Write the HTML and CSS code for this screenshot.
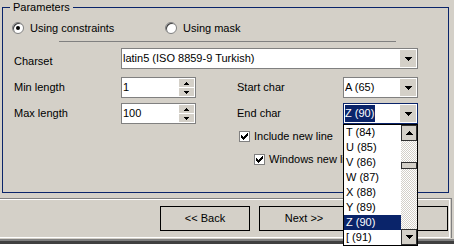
FILE: index.html
```html
<!DOCTYPE html>
<html>
<head>
<meta charset="utf-8">
<link rel="stylesheet" href="styles.css">
</head>
<body>
<div class="window">
  <div class="group">
    <span class="legend">Parameters</span>
    <div class="radios">
      <label class="radio first"><span class="rb checked"></span><span class="rtext">Using constraints</span></label>
      <label class="radio"><span class="rb"></span><span class="rtext">Using mask</span></label>
    </div>
    <div class="sep"></div>
    <div class="row charset">
      <span class="lbl low">Charset</span>
      <div class="combo wide"><span class="val">latin5 (ISO 8859-9 Turkish)</span><span class="dbtn"><svg width="7" height="4" viewBox="0 0 7 4"><path d="M0 0h7v1h-1v1h-1v1h-1v1h-1v-1h-1v-1h-1v-1h-1z"/></svg></span></div>
    </div>
    <div class="row r2">
      <span class="lbl">Min length</span>
      <div class="spin"><span class="val">1</span><span class="sbtns"><span class="sb"><svg width="5" height="3" viewBox="0 0 5 3"><path d="M2 0h1v1h1v1h1v1h-5v-1h1v-1h1z"/></svg></span><span class="sb"><svg width="5" height="3" viewBox="0 0 5 3"><path d="M0 0h5v1h-1v1h-1v1h-1v-1h-1v-1h-1z"/></svg></span></span></div>
      <span class="lbl2">Start char</span>
      <div class="combo small"><span class="val">A (65)</span><span class="dbtn"><svg width="7" height="4" viewBox="0 0 7 4"><path d="M0 0h7v1h-1v1h-1v1h-1v1h-1v-1h-1v-1h-1v-1h-1z"/></svg></span></div>
    </div>
    <div class="row r3">
      <span class="lbl">Max length</span>
      <div class="spin"><span class="val">100</span><span class="sbtns"><span class="sb"><svg width="5" height="3" viewBox="0 0 5 3"><path d="M2 0h1v1h1v1h1v1h-5v-1h1v-1h1z"/></svg></span><span class="sb"><svg width="5" height="3" viewBox="0 0 5 3"><path d="M0 0h5v1h-1v1h-1v1h-1v-1h-1v-1h-1z"/></svg></span></span></div>
      <span class="lbl2">End char</span>
      <div class="combo small focus"><span class="val"><span class="sel">Z (90)</span></span><span class="dbtn"><svg width="7" height="4" viewBox="0 0 7 4"><path d="M0 0h7v1h-1v1h-1v1h-1v1h-1v-1h-1v-1h-1v-1h-1z"/></svg></span></div>
    </div>
    <div class="check c1"><span class="cb"><svg width="7" height="7" viewBox="0 0 7 7"><path d="M0 2h1v1h1v1h1v-1h1v-1h1v-1h1v-1h1v3h-1v1h-1v1h-1v1h-1v1h-1v-1h-1v-1h-1v-1h-1z"/></svg></span><span class="ctext">Include new line</span></div>
    <div class="check c2"><span class="cb"><svg width="7" height="7" viewBox="0 0 7 7"><path d="M0 2h1v1h1v1h1v-1h1v-1h1v-1h1v-1h1v3h-1v1h-1v1h-1v1h-1v1h-1v-1h-1v-1h-1v-1h-1z"/></svg></span><span class="ctext">Windows new line</span></div>
  </div>
  <div class="footer">
    <div class="panel">
      <div class="buttons">
        <span class="button">&lt;&lt; Back</span>
        <span class="button">Next &gt;&gt;</span>
        <span class="button">Finish</span>
      </div>
    </div>
  </div>
  <div class="base"></div>

  <div class="list">
    <div class="items">
      <div class="item">T (84)</div>
      <div class="item">U (85)</div>
      <div class="item">V (86)</div>
      <div class="item">W (87)</div>
      <div class="item">X (88)</div>
      <div class="item">Y (89)</div>
      <div class="item hl">Z (90)</div>
      <div class="item">[ (91)</div>
    </div>
    <div class="scroll">
      <span class="arrow"><svg width="7" height="4" viewBox="0 0 7 4"><path d="M3 0h1v1h1v1h1v1h1v1h-7v-1h1v-1h1v-1h1z"/></svg></span>
      <div class="track"><span class="thumb"></span></div>
      <span class="arrow"><svg width="7" height="4" viewBox="0 0 7 4"><path d="M0 0h7v1h-1v1h-1v1h-1v1h-1v-1h-1v-1h-1v-1h-1z"/></svg></span>
    </div>
  </div>
</div>
</body>
</html>
```

FILE: styles.css
```css
* { box-sizing: border-box; }
html, body {
  margin: 0;
  padding: 0;
  background: #ffffff;
  width: 454px;
  height: 252px;
  overflow: hidden;
}
body {
  font-family: "Liberation Sans", Arial, sans-serif;
  font-size: 11px;
  line-height: 13px;
  color: #000;
}
.window {
  position: relative;
  width: 454px;
  height: 244px;
  background: #d4d0c8;
  overflow: visible;
  padding-top: 7px;
}
svg { display: block; fill: #000; }

/* group box */
.group {
  position: relative;
  margin: 0 5px 0 2px;
  height: 186px;
  border: 1px solid #0a246a;
}
.legend {
  position: absolute;
  top: -7px;
  left: 7px;
  padding: 0 3px;
  background: #d4d0c8;
  line-height: 13px;
}

/* radios */
.radios {
  display: flex;
  align-items: center;
  height: 16px;
  margin: 12px 0 0 9px;
}
.radio {
  display: flex;
  align-items: center;
}
.radio.first { width: 153px; }
.rb {
  position: relative;
  width: 12px;
  height: 12px;
  border-radius: 50%;
  background: #fff;
  border: 1px solid #808080;
  box-shadow: inset 1px 1px 0 #404040;
}
.rb.checked::after {
  content: "";
  position: absolute;
  left: 3px;
  top: 3px;
  width: 4px;
  height: 4px;
  border-radius: 50%;
  background: #000;
}
.rtext { margin-left: 6px; }

.sep {
  margin: 5px 0 0 56px;
  width: 337px;
  height: 1px;
  background: #808080;
}

/* rows */
.row {
  display: flex;
  align-items: center;
  height: 21px;
  margin-left: 11px;
}
.row.charset { margin-top: 6px; }
.row.r2 { margin-top: 8px; }
.row.r3 { margin-top: 5px; }
.lbl { width: 107px; }
.lbl.low { align-self: flex-start; margin-top: 7px; }
.lbl2 { width: 106px; margin-left: 41px; }

.combo, .spin {
  display: flex;
  height: 21px;
  border: 1px solid #808080;
  background: #fff;
  padding: 1px;
}
.combo.wide { width: 297px; }
.combo.small { width: 75px; }
.spin { width: 75px; height: 21px; }
.combo.focus { border-color: #0a246a; }
.val {
  flex: 1;
  display: flex;
  align-items: center;
  white-space: nowrap;
  overflow: hidden;
}
.sel {
  background: #0a246a;
  color: #fff;
  padding-right: 1px;
  line-height: 17px;
}
.dbtn {
  width: 16px;
  height: 17px;
  background: #d4d0c8;
  display: flex;
  align-items: center;
  justify-content: center;
}
.sbtns {
  width: 15px;
  display: flex;
  flex-direction: column;
  gap: 1px;
}
.sb {
  flex: 1;
  background: #d4d0c8;
  display: flex;
  align-items: center;
  justify-content: center;
}

/* checkboxes */
.check {
  display: flex;
  align-items: center;
  height: 13px;
}
.check.c1 { margin: 6px 0 0 236px; }
.check.c2 { margin: 10px 0 0 251px; }
.cb {
  width: 11px;
  height: 11px;
  background: #fff;
  border: 1px solid #808080;
  display: flex;
  align-items: center;
  justify-content: center;
}
.ctext { margin-left: 4px; }

/* footer */
.footer {
  margin-top: 5px;
  height: 40px;
  border-top: 1px solid #808080;
  border-right: 1px solid #808080;
  padding-right: 1px;
  margin-right: 2px;
  display: flex;
}
.panel {
  flex: 1;
  border-top: 1px solid #fff;
  border-right: 1px solid #fff;
  border-bottom: 1px solid #fff;
}
.buttons {
  display: flex;
  justify-content: flex-end;
  gap: 9px;
  margin-top: 6px;
  padding-right: 1px;
}
.button {
  width: 90px;
  height: 25px;
  border: 1px solid #000;
  display: flex;
  align-items: center;
  justify-content: center;
}
.base {
  margin-top: 1px;
  height: 5px;
  border-top: 2px solid #808080;
  border-bottom: 3px solid #404040;
}

/* dropdown list overlay */
.list {
  position: absolute;
  left: 343px;
  top: 124px;
  width: 75px;
  height: 122px;
  border: 1px solid #000;
  background: #fff;
  display: flex;
  z-index: 5;
}
.items { flex: 1; }
.item {
  height: 15px;
  line-height: 15px;
  padding-left: 2px;
  white-space: nowrap;
}
.item.hl { background: #0a246a; color: #fff; }
.scroll {
  width: 16px;
  display: flex;
  flex-direction: column;
}
.arrow {
  height: 16px;
  background: #d4d0c8;
  border: 1px solid #303030;
  display: flex;
  align-items: center;
  justify-content: center;
}
.track {
  flex: 1;
  background-color: #d4d0c8;
  background-image: conic-gradient(#fff 25%, #d4d0c8 0 50%, #fff 0 75%, #d4d0c8 0);
  background-size: 2px 2px;
  padding-top: 21px;
}
.thumb {
  display: block;
  height: 7px;
  background: #d4d0c8;
  border: 1px solid #303030;
}
```
